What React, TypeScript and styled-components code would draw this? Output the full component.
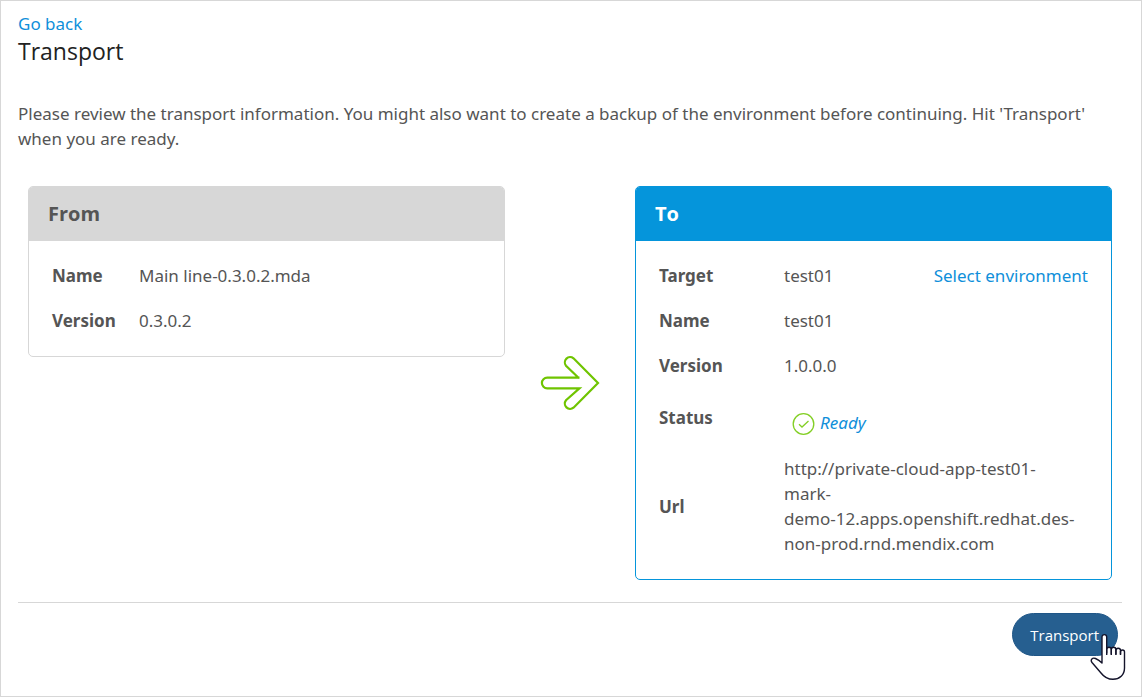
import React from "react";
import styled, { createGlobalStyle } from "styled-components";

const GlobalStyle = createGlobalStyle`
  *, *::before, *::after { box-sizing: border-box; }
  body {
    margin: 0;
    background: #fff;
    color: #555;
    font-family: "Noto Sans", "Open Sans", sans-serif;
    font-size: 17px;
    line-height: 25px;
  }
`;

const Page = styled.main`
  display: flex;
  flex-direction: column;
  min-height: 100vh;
  padding: 10px 19px 16px 17px;
  border: 1px solid #d7d7d7;
`;

const TextLink = styled.a`
  color: #0f8fda;
  text-decoration: none;
`;

const Title = styled.h1`
  margin: 0;
  color: #222;
  font-family: "Open Sans", sans-serif;
  font-size: 23px;
  font-weight: 400;
  line-height: 30px;
`;

const Intro = styled.p`
  margin: 35px 0;
`;

const Transfer = styled.div`
  display: grid;
  grid-template-columns: minmax(0, 1fr) 130px minmax(0, 1fr);
  align-items: start;
  padding: 0 10px;
`;

const ArrowCell = styled.div`
  display: flex;
  align-self: center;
  justify-content: center;
`;

const Panel = styled.section<{ $color: string }>`
  overflow: hidden;
  border: 1px solid ${(p) => p.$color};
  border-radius: 5px;
`;

const PanelTitle = styled.h2<{ $color: string; $text: string }>`
  margin: 0;
  padding: 14px 19px 15px;
  background: ${(p) => p.$color};
  color: ${(p) => p.$text};
  font-family: "Open Sans", sans-serif;
  font-size: 20px;
  font-weight: 700;
  line-height: 25px;
`;

const PanelBody = styled.div`
  padding: 12px 15px 13px;
`;

const Details = styled.table<{ $labelWidth: number }>`
  width: 100%;
  border-collapse: collapse;
  table-layout: fixed;

  col:first-child { width: ${(p) => p.$labelWidth}px; }
  col.action { width: 174px; }
`;

const Label = styled.th`
  padding: 10px 8px;
  font-weight: 700;
  text-align: left;
`;

const Value = styled.td`
  padding: 10px 8px;
`;

const ActionValue = styled(Value)`
  text-align: right;
  white-space: nowrap;
`;

const StatusValue = styled(Value)`
  height: 58px;
  padding: 22px 8px 11px 16px;
`;

const StatusLink = styled(TextLink)`
  display: flex;
  align-items: center;
  gap: 5px;
  font-style: italic;
`;

const Footer = styled.footer`
  display: flex;
  justify-content: flex-end;
  margin-top: 22px;
  padding: 10px 4px 0;
  border-top: 1px solid #d7d7d7;
`;

const PrimaryButton = styled.button`
  position: relative;
  height: 43px;
  padding: 0 18px 0 17px;
  border: 1px solid #1f5687;
  border-radius: 22px;
  background: #265f90;
  color: #fff;
  font-family: "Open Sans", sans-serif;
  font-size: 15px;
  line-height: 20px;
  cursor: pointer;
`;

const Pointer = styled.svg`
  position: absolute;
  top: 18px;
  left: 77px;
`;

const ArrowIcon = () => (
  <svg width="60" height="56" viewBox="0 0 60 56" fill="none" stroke="#6fc400" strokeWidth="2.200" aria-hidden="true">
    <path d="M39.500 22.700H7.200a5.300 5.300 0 0 0 0 10.600H39.500L26 45.300A5.300 5.300 0 0 0 33.500 52.700L58 28 33.500 3.300A5.300 5.300 0 0 0 26 10.700L39 23.200" />
  </svg>
);

const CheckIcon = () => (
  <svg width="23" height="25" viewBox="0 0 23 25" fill="none" stroke="#83cf25" strokeWidth="1.300" aria-hidden="true">
    <circle cx="11.500" cy="14" r="10.300" />
    <path d="M7 14.200l3 2.800 6.500-6" />
  </svg>
);

const HandPointer = () => (
  <Pointer width="36" height="49" viewBox="0 0 36 49" fill="#fff" stroke="#14142b" strokeWidth="1.400" strokeLinejoin="round" aria-hidden="true">
    <path d="M12 31V5a2.300 2.300 0 0 1 4.700 0V21 17.500a2.300 2.300 0 0 1 4.600 0V22 17.500a2.300 2.300 0 0 1 4.600 0V22 18.500a2.300 2.300 0 0 1 4.600 0V22 20a2 2 0 0 1 4 0V36C34.500 43 29.500 47.300 23 47.300C17 47.300 14 45 11 41L2 30.500C0 27.500 2.500 25.300 5.500 26.500Q9 28 12 31Z" />
    <path d="M16.700 16V23M21.300 17V23M25.900 17V23M30.500 19V23" fill="none" />
  </Pointer>
);

export default function App() {
  return (
    <>
      <GlobalStyle />
      <Page>
        <div>
          <TextLink href="#back">Go back</TextLink>
        </div>
        <Title>Transport</Title>
        <Intro>
          Please review the transport information. You might also want to create a backup of the
          environment before continuing. Hit 'Transport' when you are ready.
        </Intro>
        <Transfer>
          <Panel $color="#d7d7d7">
            <PanelTitle $color="#d7d7d7" $text="#555">From</PanelTitle>
            <PanelBody>
              <Details $labelWidth={87}>
                <colgroup>
                  <col />
                  <col />
                </colgroup>
                <tbody>
                  <tr>
                    <Label scope="row">Name</Label>
                    <Value>Main line-0.3.0.2.mda</Value>
                  </tr>
                  <tr>
                    <Label scope="row">Version</Label>
                    <Value>0.3.0.2</Value>
                  </tr>
                </tbody>
              </Details>
            </PanelBody>
          </Panel>
          <ArrowCell>
            <ArrowIcon />
          </ArrowCell>
          <Panel $color="#0595db">
            <PanelTitle $color="#0595db" $text="#fff">To</PanelTitle>
            <PanelBody>
              <Details $labelWidth={125}>
                <colgroup>
                  <col />
                  <col />
                  <col className="action" />
                </colgroup>
                <tbody>
                  <tr>
                    <Label scope="row">Target</Label>
                    <Value>test01</Value>
                    <ActionValue>
                      <TextLink href="#environment">Select environment</TextLink>
                    </ActionValue>
                  </tr>
                  <tr>
                    <Label scope="row">Name</Label>
                    <Value colSpan={2}>test01</Value>
                  </tr>
                  <tr>
                    <Label scope="row">Version</Label>
                    <Value colSpan={2}>1.0.0.0</Value>
                  </tr>
                  <tr>
                    <Label scope="row">Status</Label>
                    <StatusValue colSpan={2}>
                      <StatusLink href="#status">
                        <CheckIcon />
                        Ready
                      </StatusLink>
                    </StatusValue>
                  </tr>
                  <tr>
                    <Label scope="row">Url</Label>
                    <Value colSpan={2}>
                      http://private-cloud-app-test01-
                      <br />
                      mark-
                      <br />
                      demo-12.apps.openshift.redhat.des-
                      <br />
                      non-prod.rnd.mendix.com
                    </Value>
                  </tr>
                </tbody>
              </Details>
            </PanelBody>
          </Panel>
        </Transfer>
        <Footer>
          <PrimaryButton type="button">
            Transport
            <HandPointer />
          </PrimaryButton>
        </Footer>
      </Page>
    </>
  );
}
